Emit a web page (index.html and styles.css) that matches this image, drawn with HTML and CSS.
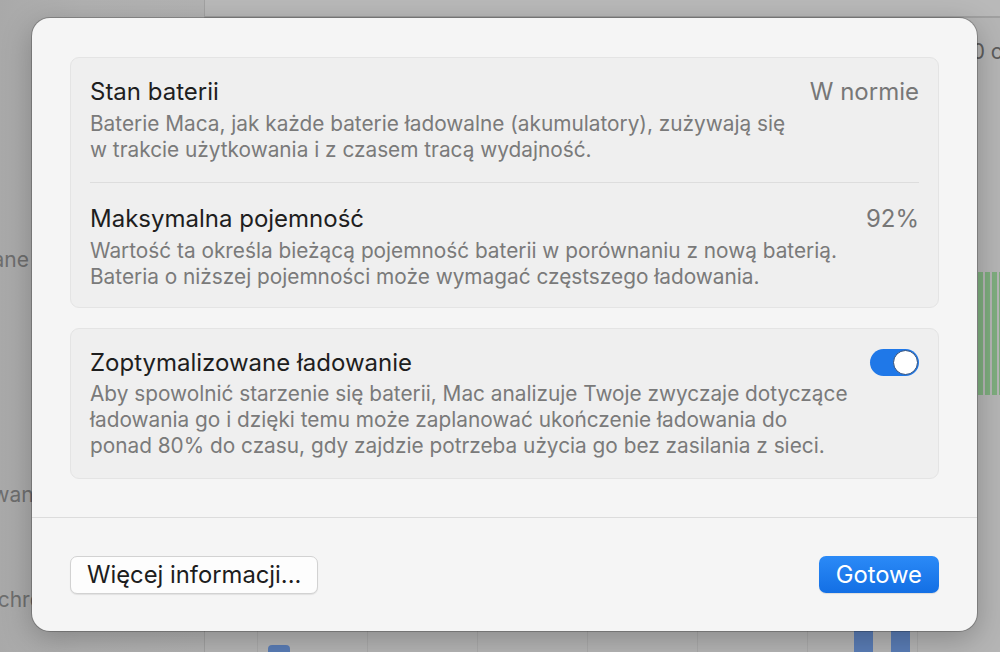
FILE: index.html
```html
<!DOCTYPE html>
<html lang="pl">
<head>
<meta charset="utf-8">
<title>Stan baterii</title>
<link rel="stylesheet" href="styles.css">
</head>
<body>
<div class="backdrop">
  <aside class="sidebar">
    <div class="side-item s1">Zaplanowane</div>
    <div class="side-item s2">Ładowanie</div>
    <div class="side-item s3">Synchronizacja</div>
  </aside>
  <main class="main">
    <div class="toolbar"></div>
    <div class="content">
      <div class="axis-row"><span class="axis-label">100 cykli</span></div>
      <div class="green-row">
        <span class="gbar"></span><span class="gbar"></span><span class="gbar"></span><span class="gbar"></span>
      </div>
      <div class="blue-row">
        <span class="bbar small"></span>
        <span class="spacer"></span>
        <span class="bbar"></span>
        <span class="bbar"></span>
        <span class="spacer2"></span>
      </div>
    </div>
  </main>
</div>

<div class="dialog">
  <div class="dialog-body">
    <section class="card">
      <div class="row">
        <div class="row-text">
          <div class="row-title">Stan baterii</div>
          <div class="row-desc">Baterie Maca, jak każde baterie ładowalne (akumulatory), zużywają się<br>w trakcie użytkowania i z czasem tracą wydajność.</div>
        </div>
        <div class="row-value">W normie</div>
      </div>
      <div class="row">
        <div class="row-text">
          <div class="row-title">Maksymalna pojemność</div>
          <div class="row-desc">Wartość ta określa bieżącą pojemność baterii w porównaniu z nową baterią.<br>Bateria o niższej pojemności może wymagać częstszego ładowania.</div>
        </div>
        <div class="row-value">92%</div>
      </div>
    </section>
    <section class="card card-toggle">
      <div class="row">
        <div class="row-text">
          <div class="row-title">Zoptymalizowane ładowanie</div>
          <div class="row-desc">Aby spowolnić starzenie się baterii, Mac analizuje Twoje zwyczaje dotyczące<br>ładowania go i dzięki temu może zaplanować ukończenie ładowania do<br>ponad 80% do czasu, gdy zajdzie potrzeba użycia go bez zasilania z sieci.</div>
        </div>
        <div class="toggle"><span class="knob"></span></div>
      </div>
    </section>
  </div>
  <footer class="dialog-footer">
    <button class="btn btn-secondary">Więcej informacji...</button>
    <button class="btn btn-primary">Gotowe</button>
  </footer>
</div>
</body>
</html>
```
FILE: styles.css
```css
html, body {
  margin: 0;
  padding: 0;
  width: 1000px;
  height: 652px;
  overflow: hidden;
  font-family: Inter, "Noto Sans", "DejaVu Sans", sans-serif;
}

.backdrop {
  display: flex;
  width: 1000px;
  height: 652px;
  background: #b3b3b3;
}

.sidebar {
  width: 204px;
  flex-shrink: 0;
  border-right: 1px solid #a2a2a2;
  background: linear-gradient(90deg, #a9a9a9 0%, #b1b1b1 40%, #b3b3b3 100%);
  display: flex;
  flex-direction: column;
  overflow: hidden;
}

.side-item {
  font-size: 21px;
  color: #6e6e6e;
  white-space: nowrap;
  line-height: 28px;
}
.s1 { margin-top: 246px; margin-left: -104px; }
.s2 { margin-top: 207px; margin-left: -57px; }
.s3 { margin-top: 77px; margin-left: -40px; }

.main {
  flex: 1;
  display: flex;
  flex-direction: column;
  overflow: hidden;
}

.toolbar {
  height: 16px;
  flex-shrink: 0;
  background: #b9b9b9;
  border-bottom: 2px solid #a0a0a0;
}

.content {
  flex: 1;
  display: flex;
  flex-direction: column;
  background:
    repeating-linear-gradient(90deg, transparent 0 52px, rgba(0,0,0,0.06) 52px 53px, transparent 53px 110px),
    #b5b5b5;
}

.axis-row {
  display: flex;
  justify-content: flex-end;
  margin-top: 21px;
  height: 26px;
}
.axis-label {
  font-size: 21px;
  color: #5c5c5c;
  white-space: nowrap;
  margin-right: -36px;
}

.green-row {
  display: flex;
  justify-content: flex-end;
  gap: 2px;
  margin-top: 207px;
  margin-right: -4px;
  height: 123px;
}
.gbar {
  width: 5px;
  background: #7ead7e;
}

.blue-row {
  display: flex;
  align-items: flex-end;
  margin-top: auto;
  height: 22px;
  gap: 18px;
}
.bbar {
  width: 19px;
  height: 22px;
  background: #5a7db6;
}
.bbar.small {
  width: 22px;
  height: 7px;
  margin-left: 63px;
  border-radius: 4px 4px 0 0;
}
.spacer { width: 528px; flex-shrink: 0; }
.spacer2 { flex: 1; }

.dialog {
  position: absolute;
  left: 32px;
  top: 18px;
  width: 945px;
  height: 613px;
  box-sizing: border-box;
  background: #f5f5f5;
  border-radius: 18px;
  box-shadow: 0 0 0 1px rgba(0,0,0,0.22), 0 8px 30px rgba(0,0,0,0.25);
  display: flex;
  flex-direction: column;
}

.dialog-body {
  padding: 39px 38px 0;
  display: flex;
  flex-direction: column;
  gap: 20px;
}

.card {
  background: #efefef;
  border: 1px solid #e4e4e4;
  border-radius: 9px;
  padding: 0 19px;
}

.row {
  display: flex;
  justify-content: space-between;
  align-items: flex-start;
  gap: 20px;
  padding: 21px 0 19px;
}
.row + .row {
  border-top: 1px solid #dddddd;
  padding-top: 23px;
  padding-bottom: 17px;
}

.row-title {
  font-size: 24px;
  line-height: 26px;
  color: #1e1e1e;
  white-space: nowrap;
}
.row-desc {
  font-size: 20.8px;
  line-height: 26px;
  color: #7a7a7a;
  margin-top: 6px;
  white-space: nowrap;
}
.card-toggle .row-desc {
  margin-top: 5px;
}
.row-value {
  font-size: 24px;
  line-height: 26px;
  color: #777777;
  white-space: nowrap;
}

.toggle {
  width: 49px;
  height: 27px;
  flex-shrink: 0;
  box-sizing: border-box;
  border-radius: 14px;
  background: #1f78e8;
  display: flex;
  justify-content: flex-end;
  align-items: center;
  padding: 1px;
  margin-top: -1px;
}
.knob {
  width: 25px;
  height: 25px;
  box-sizing: border-box;
  border-radius: 50%;
  background: #ffffff;
  border: 1.5px solid #2f4f7d;
}

.dialog-footer {
  margin-top: 38px;
  border-top: 1px solid #dcdcdc;
  padding: 38px 38px 0;
  display: flex;
  justify-content: space-between;
  align-items: flex-start;
}

.btn {
  font-family: Inter, "Noto Sans", "DejaVu Sans", sans-serif;
  font-size: 23.8px;
  height: 38px;
  border-radius: 7px;
  padding: 0 16px;
  line-height: 36px;
  cursor: default;
}
.btn-secondary {
  background: #fdfdfd;
  color: #1d1d1d;
  border: 1px solid #d2d2d2;
  box-shadow: 0 1px 1px rgba(0,0,0,0.08);
}
.btn-primary {
  background: linear-gradient(180deg, #2b8af7 0%, #136fe4 100%);
  color: #ffffff;
  border: none;
  line-height: 37px;
  height: 37px;
  padding: 0 17px;
  box-shadow: 0 1px 1px rgba(0,0,0,0.1);
}
```
